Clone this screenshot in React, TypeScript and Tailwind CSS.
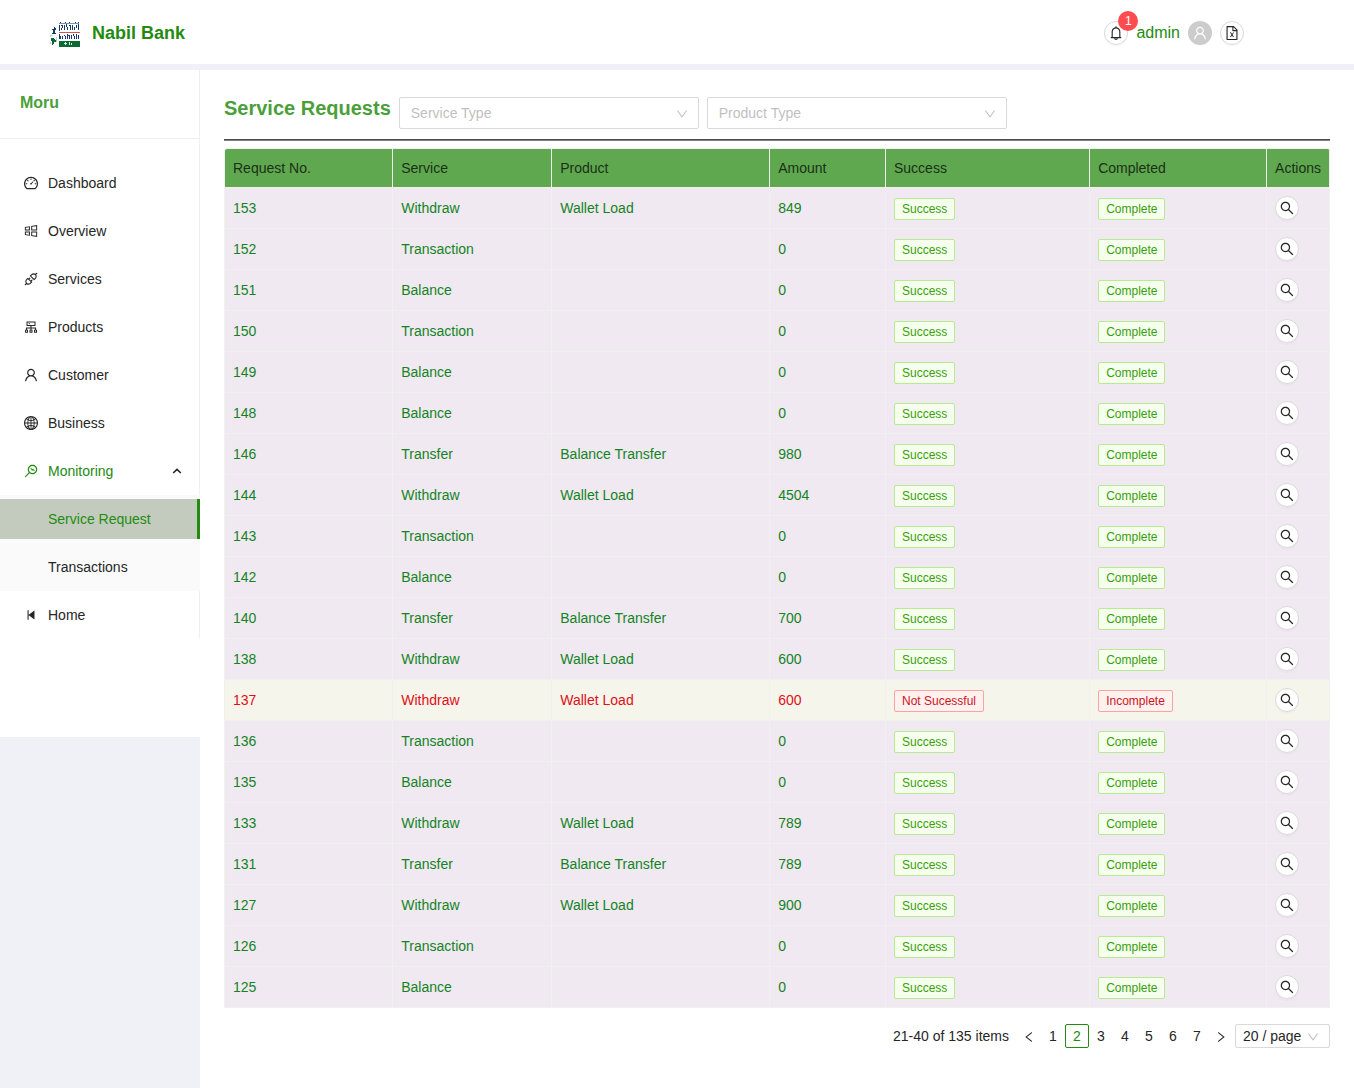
import type { ReactNode } from "react";
import type { IconType } from "react-icons";
import {
  AiOutlineApi,
  AiOutlineBell,
  AiOutlineCluster,
  AiOutlineDashboard,
  AiOutlineDown,
  AiOutlineFileExcel,
  AiOutlineGlobal,
  AiOutlineLeft,
  AiOutlineMonitor,
  AiOutlineRight,
  AiOutlineSearch,
  AiOutlineStepBackward,
  AiOutlineUser,
  AiOutlineWindows,
} from "react-icons/ai";

type Request = {
  id: number;
  service: string;
  product?: string;
  amount: number;
  failed?: boolean;
};

const requests: Request[] = [
  { id: 153, service: "Withdraw", product: "Wallet Load", amount: 849 },
  { id: 152, service: "Transaction", amount: 0 },
  { id: 151, service: "Balance", amount: 0 },
  { id: 150, service: "Transaction", amount: 0 },
  { id: 149, service: "Balance", amount: 0 },
  { id: 148, service: "Balance", amount: 0 },
  { id: 146, service: "Transfer", product: "Balance Transfer", amount: 980 },
  { id: 144, service: "Withdraw", product: "Wallet Load", amount: 4504 },
  { id: 143, service: "Transaction", amount: 0 },
  { id: 142, service: "Balance", amount: 0 },
  { id: 140, service: "Transfer", product: "Balance Transfer", amount: 700 },
  { id: 138, service: "Withdraw", product: "Wallet Load", amount: 600 },
  { id: 137, service: "Withdraw", product: "Wallet Load", amount: 600, failed: true },
  { id: 136, service: "Transaction", amount: 0 },
  { id: 135, service: "Balance", amount: 0 },
  { id: 133, service: "Withdraw", product: "Wallet Load", amount: 789 },
  { id: 131, service: "Transfer", product: "Balance Transfer", amount: 789 },
  { id: 127, service: "Withdraw", product: "Wallet Load", amount: 900 },
  { id: 126, service: "Transaction", amount: 0 },
  { id: 125, service: "Balance", amount: 0 },
];

const navItems: { label: string; icon: IconType }[] = [
  { label: "Dashboard", icon: AiOutlineDashboard },
  { label: "Overview", icon: AiOutlineWindows },
  { label: "Services", icon: AiOutlineApi },
  { label: "Products", icon: AiOutlineCluster },
  { label: "Customer", icon: AiOutlineUser },
  { label: "Business", icon: AiOutlineGlobal },
];

const headings = ["Request No.", "Service", "Product", "Amount", "Success", "Completed", "Actions"];

// Trims the outer margin of the icon set's 1024-unit artboard.
const ICON_BOX = "64 64 896 896";

function BankLogo() {
  return (
    <svg viewBox="0 -4 30 30" className="size-[30px]" aria-hidden="true">
      <g fill="#123a70">
        <rect x="9" y="1" width="20" height="1" opacity=".55" />
        <path d="M10 0h1v1h-1zM15 0h1v1h-1zM19 0h1v1h-1zM25 0h1v1h-1zM28 0h1v1h-1z" />
        <path d="M9 3h1v6H9zM11 3h2v1h-2zM12 4h1v2h-1zM11 6h1v2h-1zM14 3h1v5h-1zM16 2h1v3h-1zM17 5h1v3h-1zM19 3h2v1h-2zM20 4h1v4h-1zM22 3h1v5h-1zM24 5h1v3h-1zM26 3h1v3h-1zM28 2h1v6h-1z" />
        <path d="M9 12h1v5H9zM10 14h1v3h-1zM12 14h1v3h-1zM14 13h1v1h-1zM15 14h1v3h-1zM17 12h1v5h-1zM18 13h2v1h-2zM19 14h1v3h-1zM21 13h1v4h-1zM23 12h1v2h-1zM24 14h1v3h-1zM26 12h1v5h-1zM28 13h1v4h-1z" />
        <path d="M4 5h1v1h1v2h-1v3h1v1H2v-1h1V8H2V7h2z" />
      </g>
      <rect x="9" y="10" width="21" height="1" fill="#d9534f" />
      <rect x="9" y="19" width="21" height="6" fill="#0b6a32" />
      <path d="M14 21h3v1h-3zM15 20h1v3h-1zM19 20h1v3h-1zM21 21h1v2h-1z" fill="#d5e8da" />
      <path d="M1 16h3v1h1v1h1v2H4v2H3v1H2v-4H1z" fill="#0b6a32" />
      <path d="M0 13h3v1H1v1H0zM6 15h1v5H6zM0 20h1v2H0z" fill="#c3cbd2" />
    </svg>
  );
}

function RoundButton({ label, children }: { label: string; children: ReactNode }) {
  return (
    <button
      type="button"
      aria-label={label}
      className="flex size-6 items-center justify-center rounded-full border border-[#d9d9d9] bg-white text-sm text-black/85 shadow-[0_2px_0_rgba(0,0,0,0.02)]"
    >
      {children}
    </button>
  );
}

function Tag({ failed, children }: { failed?: boolean; children: ReactNode }) {
  const tone = failed
    ? "border-[#ffa39e] bg-[#fff1f0] text-[#cf1322]"
    : "border-[#b7eb8f] bg-[#f6ffed] text-[#389e0d]";
  return (
    <span className={`mr-2 inline-block rounded-xs border px-[7px] text-xs leading-5 whitespace-nowrap ${tone}`}>
      {children}
    </span>
  );
}

function FilterSelect({ label }: { label: string }) {
  return (
    <div className="relative w-[300px]">
      <select
        aria-label={label}
        defaultValue=""
        className="h-8 w-full appearance-none rounded-xs border border-[#d9d9d9] bg-white px-[11px] text-sm text-[#bfbfbf]"
      >
        <option value="">{label}</option>
      </select>
      <AiOutlineDown
        viewBox={ICON_BOX}
        className="pointer-events-none absolute top-[11px] right-[11px] size-3 text-[#bfbfbf]"
      />
    </div>
  );
}

function Sidebar() {
  return (
    <aside className="w-[200px] shrink-0 self-start bg-white pb-[98px]">
      <div className="border-r border-[#f0f0f0]">
        <div className="flex h-[69px] items-center border-b border-[#f0f0f0] px-5 pb-0.5">
          <span className="text-base font-bold text-[#4a9f3a]">Moru</span>
        </div>
        <nav className="flex flex-col pt-5">
          {navItems.map(({ label, icon: Icon }) => (
            <a key={label} href="#" className="my-1 flex h-10 items-center gap-2.5 px-6">
              <Icon viewBox={ICON_BOX} className="size-3.5" />
              {label}
            </a>
          ))}
          <button type="button" className="my-1 flex h-10 items-center gap-2.5 pr-[17px] pl-6 text-[#238b10]">
            <AiOutlineMonitor viewBox={ICON_BOX} className="size-3.5" />
            Monitoring
            <svg
              viewBox="0 0 10 10"
              className="ml-auto size-2.5 text-black/85"
              fill="none"
              stroke="currentColor"
              strokeWidth="1.6"
              aria-hidden="true"
            >
              <path d="M1.2 7 5 3.4 8.8 7" />
            </svg>
          </button>
          <div className="-mr-px bg-[#fafafa] py-1">
            <a
              href="#"
              className="mb-2 flex h-10 items-center border-r-3 border-[#238b10] bg-[#c3cbbe] pl-12 text-[#238b10]"
            >
              Service Request
            </a>
            <a href="#" className="flex h-10 items-center pl-12">
              Transactions
            </a>
          </div>
          <a href="#" className="my-1 flex h-10 items-center gap-2.5 px-6">
            <AiOutlineStepBackward className="size-3.5" />
            Home
          </a>
        </nav>
      </div>
    </aside>
  );
}

function RequestTable() {
  return (
    <table className="w-full border-separate border-spacing-0 rounded-t-xs border-t border-l border-[#f0f0f0] text-left leading-[22px]">
      <thead>
        <tr className="bg-[#5fa84f] text-[#1b3017]">
          {headings.map((heading) => (
            <th
              key={heading}
              scope="col"
              className="border-r border-b border-[#f0f0f0] p-2 font-normal whitespace-nowrap first:rounded-tl-xs last:w-px last:rounded-tr-xs"
            >
              {heading}
            </th>
          ))}
        </tr>
      </thead>
      <tbody>
        {requests.map((r) => (
          <tr
            key={r.id}
            className={
              r.failed
                ? "bg-[#f5f5eb] text-[#e00f17] *:border-r *:border-b *:border-[#f0f0f0] *:px-2"
                : "bg-[#f1e9f1] text-[#12841f] *:border-r *:border-b *:border-[#f0f0f0] *:px-2"
            }
          >
            <td>{r.id}</td>
            <td>{r.service}</td>
            <td>{r.product}</td>
            <td>{r.amount}</td>
            <td>
              <Tag failed={r.failed}>{r.failed ? "Not Sucessful" : "Success"}</Tag>
            </td>
            <td>
              <Tag failed={r.failed}>{r.failed ? "Incomplete" : "Complete"}</Tag>
            </td>
            <td className="py-2">
              <RoundButton label={`View request ${r.id}`}>
                <AiOutlineSearch viewBox={ICON_BOX} />
              </RoundButton>
            </td>
          </tr>
        ))}
      </tbody>
    </table>
  );
}

function Pagination() {
  return (
    <nav aria-label="Pagination" className="mt-4 flex h-6 items-center justify-end">
      <span className="mr-2">21-40 of 135 items</span>
      <button type="button" aria-label="Previous page" className="flex size-6 items-center justify-center pt-0.5">
        <AiOutlineLeft viewBox={ICON_BOX} className="size-3" />
      </button>
      {[1, 2, 3, 4, 5, 6, 7].map((page) => (
        <button
          key={page}
          type="button"
          aria-current={page === 2 ? "page" : undefined}
          className={
            page === 2
              ? "size-6 rounded-xs border border-[#238b10] leading-[22px] text-[#238b10]"
              : "size-6 leading-6"
          }
        >
          {page}
        </button>
      ))}
      <button type="button" aria-label="Next page" className="flex size-6 items-center justify-center pt-0.5">
        <AiOutlineRight viewBox={ICON_BOX} className="size-3" />
      </button>
      <div className="relative ml-0.5">
        <select
          aria-label="Page size"
          className="h-6 w-[95px] appearance-none rounded-xs border border-[#d9d9d9] bg-white px-[7px] text-sm leading-[22px]"
        >
          <option>20 / page</option>
        </select>
        <AiOutlineDown
          viewBox={ICON_BOX}
          className="pointer-events-none absolute top-[7px] right-[11px] size-3 text-[#bfbfbf]"
        />
      </div>
    </nav>
  );
}

export default function App() {
  return (
    <div className="flex min-h-screen flex-col bg-[#f0f1f6] font-['Liberation_Sans',Arial,sans-serif] text-sm text-[#262626]">
      <header className="mb-1.5 flex h-16 items-center justify-between bg-white pt-0.5 pr-[110px] pl-[50px]">
        <a href="#" className="flex items-center gap-3 text-lg font-bold text-[#238b10]">
          <BankLogo />
          Nabil Bank
        </a>
        <div className="flex items-center gap-2">
          <div className="relative">
            <RoundButton label="Notifications">
              <AiOutlineBell viewBox={ICON_BOX} />
            </RoundButton>
            <span className="absolute -top-2.5 -right-2.5 flex size-5 items-center justify-center rounded-full bg-[#ff4d4f] text-xs text-white">
              1
            </span>
          </div>
          <span className="text-base text-[#238b10]">admin</span>
          <span className="flex size-6 items-center justify-center rounded-full bg-[#cccccc] text-sm text-white">
            <AiOutlineUser viewBox={ICON_BOX} />
          </span>
          <RoundButton label="Export to Excel">
            <AiOutlineFileExcel viewBox={ICON_BOX} />
          </RoundButton>
        </div>
      </header>
      <div className="flex grow">
        <Sidebar />
        <main className="min-w-0 grow bg-white px-6 pt-[27px] pb-10">
          <div className="flex gap-2">
            <h1 className="text-xl leading-[22px] font-bold text-[#4a9f3a]">Service Requests</h1>
            <FilterSelect label="Service Type" />
            <FilterSelect label="Product Type" />
          </div>
          <hr className="mt-2.5 mb-[7px] h-0.5 border-t border-b border-t-[#4d4d4d] border-b-[#808080]" />
          <RequestTable />
          <Pagination />
        </main>
      </div>
    </div>
  );
}
